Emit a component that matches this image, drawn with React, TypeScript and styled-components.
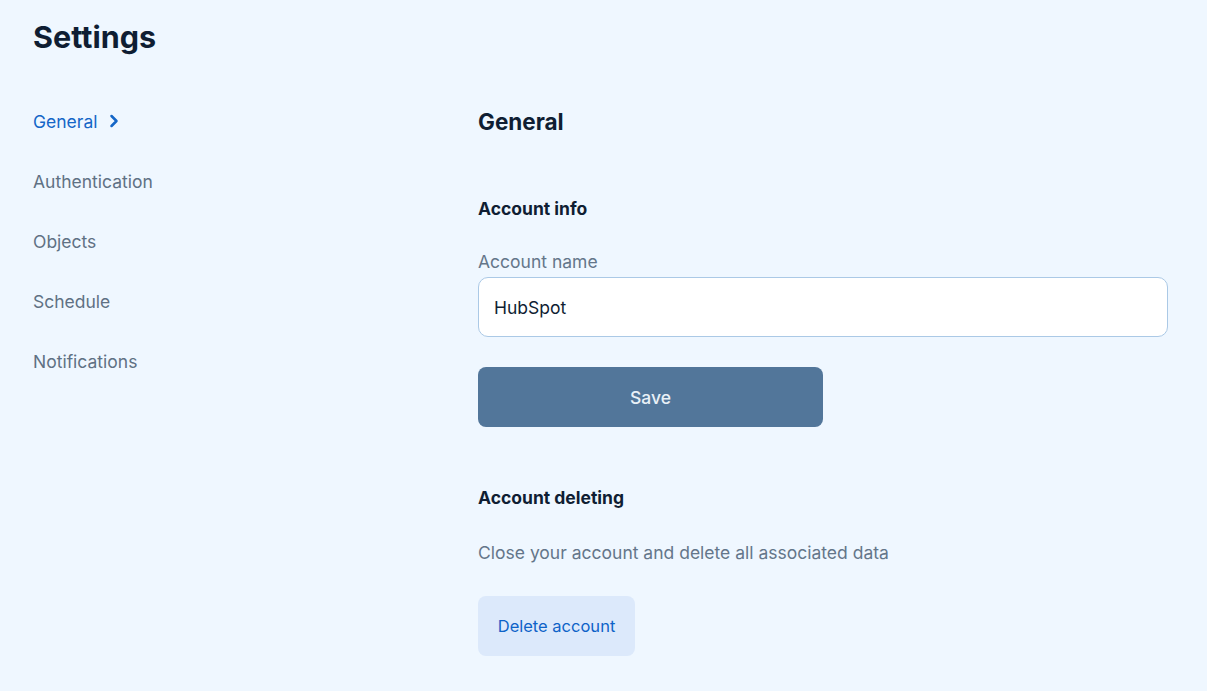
import styled, { createGlobalStyle } from "styled-components";
import { ChevronRight } from "lucide-react";

const GlobalStyle = createGlobalStyle`
  html, body {
    margin: 0;
    padding: 0;
    background-color: #eff7ff;
    font-family: Inter, "Noto Sans", sans-serif;
  }
`;

const Page = styled.div`
  min-height: 691px;
  padding: 0 33px;
  box-sizing: border-box;
`;

const Title = styled.h1`
  margin: 18px 0 0;
  font-size: 30.5px;
  line-height: 38px;
  font-weight: 700;
  color: #0f1e33;
`;

const Layout = styled.div`
  display: grid;
  grid-template-columns: 445px 690px;
  margin-top: 36px;
`;

const Nav = styled.nav`
  display: flex;
  flex-direction: column;
`;

const NavItem = styled.a<{ active?: boolean }>`
  display: flex;
  align-items: center;
  gap: 7px;
  height: 60px;
  padding-bottom: 2px;
  box-sizing: border-box;
  font-size: 17.5px;
  color: ${(props) => (props.active ? "#1466c7" : "#5f7184")};
  text-decoration: none;
  cursor: pointer;
`;

const Main = styled.main`
  display: flex;
  flex-direction: column;
  align-items: flex-start;
`;

const Heading = styled.h2`
  margin: 0;
  font-size: 22.5px;
  line-height: 60px;
  font-weight: 700;
  color: #0f1e33;
`;

const SectionTitle = styled.h3<{ gap: number }>`
  margin: ${(props) => props.gap}px 0 0;
  font-size: 17.5px;
  line-height: 24px;
  font-weight: 700;
  color: #0f1e33;
`;

const Label = styled.label`
  margin-top: 29px;
  font-size: 17.5px;
  line-height: 24px;
  color: #64768a;
`;

const Input = styled.input`
  margin-top: 3px;
  width: 690px;
  height: 60px;
  box-sizing: border-box;
  padding: 0 15px;
  border: 1px solid #abc9e6;
  border-radius: 10px;
  background: #ffffff;
  font-family: inherit;
  font-size: 17.5px;
  color: #0f1e33;
  outline: none;
`;

const Button = styled.button<{ variant: "primary" | "soft" }>`
  height: 60px;
  box-sizing: border-box;
  border: none;
  border-radius: 8px;
  font-family: inherit;
  cursor: pointer;
  ${(props) =>
    props.variant === "primary"
      ? `
    width: 345px;
    margin-top: 30px;
    background: #52769a;
    color: #e9f0f7;
    font-size: 17.5px;
    font-weight: 500;
  `
      : `
    width: 157px;
    margin-top: 31px;
    background: #dce9fb;
    color: #0e63c8;
    font-size: 16.5px;
    font-weight: 400;
  `}
`;

const Description = styled.p`
  margin: 31px 0 0;
  font-size: 17.5px;
  line-height: 24px;
  color: #64768a;
`;

const navItems = ["General", "Authentication", "Objects", "Schedule", "Notifications"];

function App() {
  return (
    <>
      <GlobalStyle />
      <Page>
        <Title>Settings</Title>
        <Layout>
          <Nav>
            {navItems.map((item, i) => (
              <NavItem key={item} active={i === 0}>
                {item}
                {i === 0 && <ChevronRight size={20} strokeWidth={3} />}
              </NavItem>
            ))}
          </Nav>
          <Main>
            <Heading>General</Heading>
            <SectionTitle gap={45}>Account info</SectionTitle>
            <Label>Account name</Label>
            <Input defaultValue="HubSpot" />
            <Button variant="primary">Save</Button>
            <SectionTitle gap={59}>Account deleting</SectionTitle>
            <Description>Close your account and delete all associated data</Description>
            <Button variant="soft">Delete account</Button>
          </Main>
        </Layout>
      </Page>
    </>
  );
}

export default App;
